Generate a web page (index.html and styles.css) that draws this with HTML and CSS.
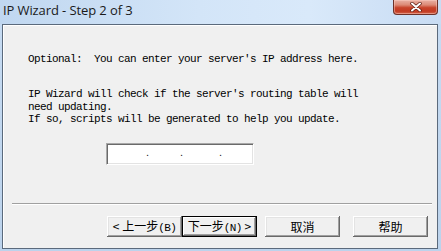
FILE: index.html
```html
<!DOCTYPE html>
<html>
<head>
<meta charset="utf-8">
<link rel="stylesheet" href="styles.css">
</head>
<body>
<div class="window">
  <div class="titlebar">
    <span class="title">IP Wizard - Step 2 of 3</span>
    <button class="close" aria-label="Close">
      <svg width="14" height="10" viewBox="0 0 14 10">
        <path d="M3 1.5 L11 8.5 M11 1.5 L3 8.5" stroke="#5a1a10" stroke-width="3.4" stroke-linecap="round"/>
        <path d="M3 1.5 L11 8.5 M11 1.5 L3 8.5" stroke="#ffffff" stroke-width="2" stroke-linecap="round"/>
      </svg>
    </button>
  </div>
  <div class="client">
    <p class="text first">Optional:  You can enter your server's IP address here.</p>
    <p class="text second">IP Wizard will check if the server's routing table will<br>need updating.<br>If so, scripts will be generated to help you update.</p>
    <div class="ipbox">
      <span class="dot d1">.</span>
      <span class="dot d2">.</span>
      <span class="dot d3">.</span>
    </div>
    <div class="separator"></div>
    <div class="buttons">
      <button class="btn">&lt; 上一步<span class="acc">(B)</span></button>
      <button class="btn default">下一步<span class="acc">(N)</span> &gt;</button>
      <button class="btn cancel">取消</button>
      <button class="btn help">帮助</button>
    </div>
  </div>
</div>
</body>
</html>
```

FILE: styles.css
```css
html, body {
  margin: 0;
  padding: 0;
}
body {
  width: 441px;
  height: 251px;
  overflow: hidden;
  background: #c4d8ee;
}
.window {
  width: 441px;
  height: 251px;
  display: flex;
  flex-direction: column;
  background: linear-gradient(to bottom, #c7dcf3 0%, #bcd3ec 100%);
}
.titlebar {
  height: 24px;
  display: flex;
  align-items: flex-start;
  background: linear-gradient(to right, #c0d7f0 0%, #d3e5f8 45%, #d9e9fa 70%, #c8dcf3 100%);
}
.title {
  font-family: "Open Sans", "Noto Sans", sans-serif;
  font-size: 13px;
  color: #1a1a1a;
  margin-left: 3px;
  margin-top: 1px;
  line-height: 18px;
  letter-spacing: -0.1px;
}
.close {
  margin-left: auto;
  margin-right: 3px;
  width: 45px;
  height: 15px;
  padding: 0;
  border: 1px solid #6d3128;
  border-top: none;
  border-radius: 0 0 4px 4px;
  background: linear-gradient(to bottom, #e9b1a4 0%, #dc8a76 35%, #c8442b 55%, #c23a22 80%, #d2664c 100%);
  box-shadow: inset 0 0 0 1px rgba(255,210,200,0.45);
  display: flex;
  align-items: center;
  justify-content: center;
}
.close svg { display: block; }
.client {
  margin-left: 2px;
  width: 434px;
  height: 223px;
  border: 1px solid #5b6a7c;
  background: #f0f0f0;
  box-shadow: inset 1px 1px 0 #ffffff;
  display: flex;
  flex-direction: column;
}
.text {
  margin: 0;
  padding-left: 25px;
  font-family: "Liberation Mono", "DejaVu Sans Mono", monospace;
  font-size: 11px;
  letter-spacing: -0.6px;
  color: #000;
  white-space: pre;
}
.first {
  margin-top: 28px;
  line-height: 12px;
}
.second {
  margin-top: 23px;
  line-height: 12.5px;
}
.ipbox {
  margin-top: 17px;
  margin-left: 103px;
  width: 148px;
  height: 22px;
  box-sizing: border-box;
  background: #ffffff;
  border-top: 1px solid #a8a8a8;
  border-left: 1px solid #a8a8a8;
  border-right: 1px solid #ffffff;
  border-bottom: 1px solid #ffffff;
  box-shadow: inset 1px 1px 0 #6a6a6a, inset -1px -1px 0 #e3e3e3;
  position: relative;
}
.dot {
  position: absolute;
  top: 2px;
  font-family: "Liberation Sans", sans-serif;
  font-size: 11px;
  line-height: 12px;
  color: #222;
}
.d1 { left: 39px; }
.d2 { left: 73px; }
.d3 { left: 112px; }
.separator {
  margin-top: 38px;
  margin-left: 9px;
  width: 420px;
  height: 1px;
  background: #a0a0a0;
  border-bottom: 1px solid #ffffff;
}
.buttons {
  margin-top: 11px;
  margin-left: 104px;
  display: flex;
}
.btn {
  width: 75px;
  height: 21px;
  padding: 0;
  margin: 0;
  border: none;
  background: #f0f0f0;
  box-shadow: inset -1px -1px 0 #696969, inset 1px 1px 0 #ffffff, inset -2px -2px 0 #a0a0a0, inset 2px 2px 0 #e3e3e3;
  font-family: "Noto Sans CJK SC", sans-serif;
  font-size: 12px;
  line-height: 19px;
  color: #000;
  white-space: nowrap;
}
.acc {
  font-family: "Liberation Mono", monospace;
  font-size: 11px;
  letter-spacing: -0.6px;
}
.default {
  box-shadow: inset 0 0 0 1px #000, inset -2px -2px 0 #696969, inset 2px 2px 0 #ffffff, inset -3px -3px 0 #a0a0a0;
}
.cancel { margin-left: 8px; }
.help { margin-left: 13px; }
```
